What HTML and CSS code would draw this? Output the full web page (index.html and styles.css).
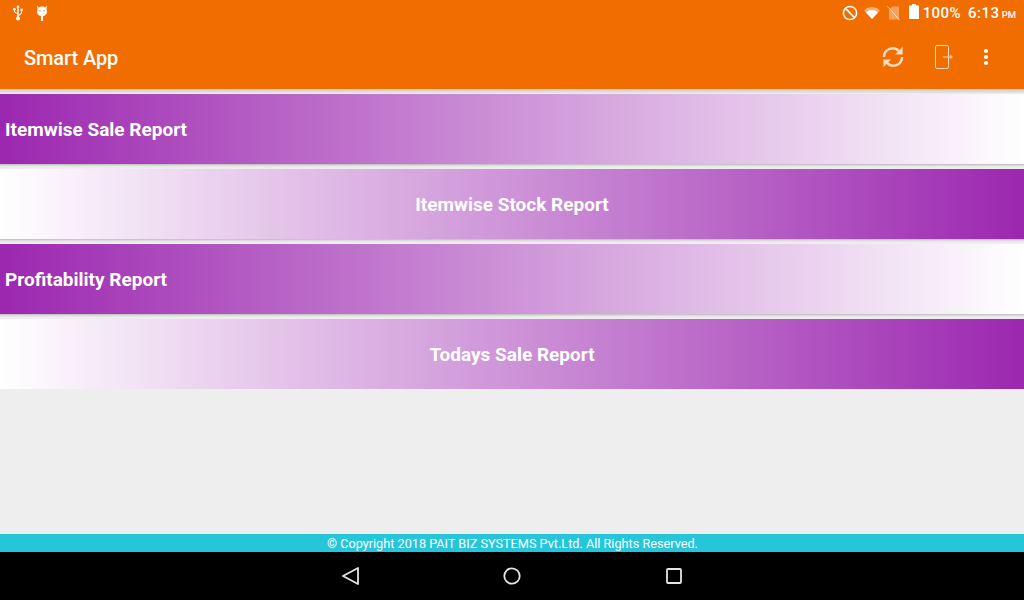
FILE: index.html
```html
<!DOCTYPE html>
<html lang="en">
<head>
  <meta charset="UTF-8" />
  <meta name="viewport" content="width=device-width, initial-scale=1" />
  <title>Smart App</title>
  <link rel="stylesheet" href="styles.css">
</head>
<body>

  <header class="app-header">
    <div class="status-bar">
      <div class="status-left">
        <svg class="usb-icon" width="12" height="18" viewBox="0 0 12 18">
          <path d="M6 1 L7.8 3.6 H6.7 V11 L9.2 8.8 V6.9 H8.5 V4.8 H10.8 V6.9 H10.1 V9.3 L6.7 12.3 V14 H5.3 V10.6 L1.9 7.7 V6.4 A1.3 1.3 0 1 1 2.9 6.4 V7.2 L5.3 9.2 V3.6 H4.2 Z" fill="#fff"/>
          <circle cx="6" cy="14.6" r="2" fill="#fff"/>
        </svg>
        <svg class="android-icon" width="12" height="16" viewBox="0 0 12 16">
          <circle cx="6" cy="6.5" r="5" fill="#fff"/>
          <path d="M1 0.6 L3.4 3 L1.6 4.6 Z M11 0.6 L8.6 3 L10.4 4.6 Z" fill="#fff"/>
          <rect x="5" y="10" width="2" height="6" fill="#fff"/>
          <circle cx="4" cy="5.8" r="0.7" fill="#f26d00"/>
          <circle cx="8" cy="5.8" r="0.7" fill="#f26d00"/>
        </svg>
      </div>
      <div class="status-right">
        <svg class="block-icon" width="16" height="16" viewBox="0 0 16 16">
          <circle cx="8" cy="8" r="6.6" fill="none" stroke="#fff" stroke-width="1.5"/>
          <line x1="3.4" y1="3.4" x2="12.6" y2="12.6" stroke="#fff" stroke-width="1.5"/>
        </svg>
        <svg class="wifi-icon" width="16" height="12" viewBox="0 0 16 12">
          <path d="M0 3.2 A11.5 11.5 0 0 1 16 3.2 L8 12 Z" fill="#fff" opacity="0.45"/>
          <path d="M2 5.4 A8.6 8.6 0 0 1 14 5.4 L8 12 Z" fill="#fff"/>
        </svg>
        <svg class="sim-icon" width="13" height="14" viewBox="0 0 13 14">
          <path d="M5 0.5 H12 V13.5 H2 V3.5 Z" fill="#fff" opacity="0.35"/>
          <line x1="0.5" y1="0.5" x2="12.5" y2="14" stroke="#fff" stroke-width="1" opacity="0.7"/>
        </svg>
        <svg class="battery-icon" width="10" height="15" viewBox="0 0 10 15">
          <path d="M3 0 H7 V1.5 H10 V15 H0 V1.5 H3 Z" fill="#fff"/>
        </svg>
        <span class="battery-text">100%</span>
        <span class="clock">6:13<small>PM</small></span>
      </div>
    </div>
    <div class="toolbar">
      <div class="app-title">Smart App</div>
      <div class="actions">
        <svg class="sync-icon" width="24" height="24" viewBox="0 0 24 24">
          <path d="M3 12 A8.6 8.6 0 0 1 18.2 6.4" fill="none" stroke="#fbdcc2" stroke-width="2.4"/>
          <path d="M21 12 A8.6 8.6 0 0 1 5.8 17.6" fill="none" stroke="#fbdcc2" stroke-width="2.4"/>
          <path d="M21.6 1.8 V9.4 H14 Z" fill="#fbdcc2"/>
          <path d="M2.4 22.2 V14.6 H10 Z" fill="#fbdcc2"/>
        </svg>
        <svg class="exit-icon" width="20" height="26" viewBox="0 0 20 26">
          <rect x="1.5" y="1.5" width="13" height="23" rx="1.5" fill="none" stroke="#fbdcc2" stroke-width="1"/>
          <line x1="9" y1="13" x2="16" y2="13" stroke="#f9b98a" stroke-width="1.4"/>
          <path d="M16 10.6 L19 13 L16 15.4 Z" fill="#f9b98a"/>
        </svg>
        <svg class="more-icon" width="6" height="18" viewBox="0 0 6 18">
          <circle cx="3" cy="3" r="2.1" fill="#fff"/>
          <circle cx="3" cy="9" r="2.1" fill="#fff"/>
          <circle cx="3" cy="15" r="2.1" fill="#fff"/>
        </svg>
      </div>
    </div>
  </header>

  <main class="report-list">
    <div class="report-row row-left">Itemwise Sale Report</div>
    <div class="report-row row-right">Itemwise Stock Report</div>
    <div class="report-row row-left">Profitability Report</div>
    <div class="report-row row-right">Todays Sale Report</div>
  </main>

  <div class="copyright">© Copyright 2018 PAIT BIZ SYSTEMS Pvt.Ltd. All Rights Reserved.</div>

  <nav class="nav-bar">
    <svg width="18" height="20" viewBox="0 0 18 20">
      <path d="M16 2 V18 L1 10 Z" fill="none" stroke="#e4e4e4" stroke-width="1.8" stroke-linejoin="round"/>
    </svg>
    <svg class="nav-home" width="18" height="18" viewBox="0 0 18 18">
      <circle cx="9" cy="9" r="7.7" fill="none" stroke="#e4e4e4" stroke-width="1.8"/>
    </svg>
    <svg width="16" height="16" viewBox="0 0 16 16">
      <rect x="1" y="1" width="14" height="14" rx="1" fill="none" stroke="#e4e4e4" stroke-width="1.8"/>
    </svg>
  </nav>

</body>
</html>
```

FILE: styles.css
```css
html, body {
  height: 100%;
}

body {
  margin: 0;
  height: 600px;
  display: flex;
  flex-direction: column;
  background: #eeeeee;
  font-family: Roboto, sans-serif;
  color: #fff;
  overflow: hidden;
}

.app-header {
  background: #f26d00;
  height: 89px;
  flex-shrink: 0;
}

.status-bar {
  height: 25px;
  display: flex;
  align-items: center;
  justify-content: space-between;
}

.status-left {
  display: flex;
  align-items: center;
  gap: 12px;
  padding-left: 12px;
}

.status-right {
  display: flex;
  align-items: center;
  padding-right: 8px;
}

.block-icon { margin-right: 6px; }
.wifi-icon { margin-right: 7px; }
.sim-icon { margin-right: 9px; }
.battery-icon { margin-right: 4px; margin-top: -3px; }

.battery-text {
  font-size: 15px;
  font-weight: 500;
  letter-spacing: 0.4px;
  margin-right: 7px;
}

.clock {
  font-size: 15px;
  font-weight: 500;
  letter-spacing: 0.55px;
}

.clock small {
  font-size: 9.5px;
  margin-left: 2px;
  letter-spacing: 0;
}

.toolbar {
  height: 64px;
  display: flex;
  align-items: center;
  justify-content: space-between;
  padding: 0 35px 0 24px;
}

.app-title {
  font-size: 20px;
  font-weight: 500;
  letter-spacing: -0.005em;
  padding-top: 2px;
}

.actions {
  display: flex;
  align-items: center;
}

.sync-icon { margin-right: 29px; }
.exit-icon { margin-right: 29px; }

.report-list {
  flex: 1;
  display: flex;
  flex-direction: column;
  gap: 5px;
  padding-top: 5px;
  background: linear-gradient(#c9c9c9, #eeeeee 5px);
}

.report-row {
  height: 70px;
  display: flex;
  align-items: center;
  font-size: 19px;
  font-weight: 700;
  box-shadow: 0 1px 1px #c6c6c6, 0 2px 2px #d8d8d8;
}

.report-row:last-child {
  box-shadow: none;
}

.row-left {
  padding-left: 5px;
  background: linear-gradient(to right, #9c27b0, #ffffff);
}

.row-right {
  justify-content: center;
  background: linear-gradient(to left, #9c27b0, #ffffff);
}

.copyright {
  height: 18px;
  flex-shrink: 0;
  background: #26c6da;
  font-size: 12.7px;
  line-height: 19px;
  padding-left: 1px;
  text-align: center;
}

.nav-bar {
  height: 48px;
  flex-shrink: 0;
  background: #000;
  display: flex;
  align-items: center;
  justify-content: center;
  gap: 144px;
}

.nav-home {
  margin: 0 1px 0 -1px;
}
```
